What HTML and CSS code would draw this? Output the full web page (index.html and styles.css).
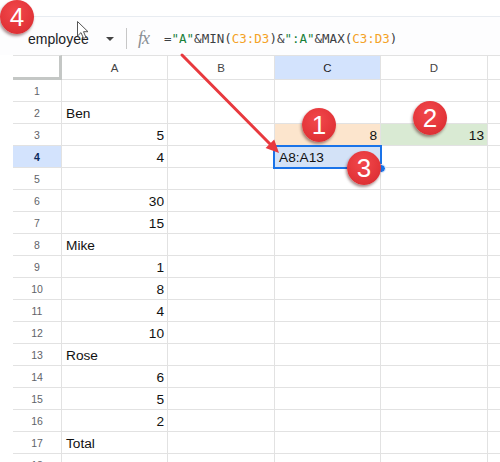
FILE: index.html
```html
<!DOCTYPE html>
<html>
<head>
<meta charset="utf-8">
<link rel="stylesheet" href="styles.css">
</head>
<body>
<div class="top"></div>
<div class="fbar">
  <span class="namebox">employee</span>
  <span class="tri"></span>
  <span class="sep"></span>
  <span class="fx">fx</span>
  <span class="formula"><span class="k">=</span><span class="s">"A"</span><span class="k">&amp;MIN(</span><span class="r">C3:D3</span><span class="k">)&amp;</span><span class="s">":A"</span><span class="k">&amp;MAX(</span><span class="r">C3:D3</span><span class="k">)</span></span>
</div>
<div class="sheet">
  <div class="sp"></div><div class="c corner"></div><div class="c ch">A</div><div class="c ch">B</div><div class="c ch hl">C</div><div class="c ch">D</div><div class="c ch last"></div>

  <div class="sp"></div><div class="c rh">1</div><div class="c"></div><div class="c"></div><div class="c"></div><div class="c"></div><div class="c last"></div>
  <div class="sp"></div><div class="c rh">2</div><div class="c">Ben</div><div class="c"></div><div class="c"></div><div class="c"></div><div class="c last"></div>
  <div class="sp"></div><div class="c rh">3</div><div class="c n">5</div><div class="c"></div><div class="c n peach">8</div><div class="c n green">13</div><div class="c last"></div>
  <div class="sp"></div><div class="c rh rhl">4</div><div class="c n">4</div><div class="c"></div><div class="c selcell">A8:A13</div><div class="c"></div><div class="c last"></div>
  <div class="sp"></div><div class="c rh">5</div><div class="c"></div><div class="c"></div><div class="c"></div><div class="c"></div><div class="c last"></div>
  <div class="sp"></div><div class="c rh">6</div><div class="c n">30</div><div class="c"></div><div class="c"></div><div class="c"></div><div class="c last"></div>
  <div class="sp"></div><div class="c rh">7</div><div class="c n">15</div><div class="c"></div><div class="c"></div><div class="c"></div><div class="c last"></div>
  <div class="sp"></div><div class="c rh">8</div><div class="c">Mike</div><div class="c"></div><div class="c"></div><div class="c"></div><div class="c last"></div>
  <div class="sp"></div><div class="c rh">9</div><div class="c n">1</div><div class="c"></div><div class="c"></div><div class="c"></div><div class="c last"></div>
  <div class="sp"></div><div class="c rh">10</div><div class="c n">8</div><div class="c"></div><div class="c"></div><div class="c"></div><div class="c last"></div>
  <div class="sp"></div><div class="c rh">11</div><div class="c n">4</div><div class="c"></div><div class="c"></div><div class="c"></div><div class="c last"></div>
  <div class="sp"></div><div class="c rh">12</div><div class="c n">10</div><div class="c"></div><div class="c"></div><div class="c"></div><div class="c last"></div>
  <div class="sp"></div><div class="c rh">13</div><div class="c">Rose</div><div class="c"></div><div class="c"></div><div class="c"></div><div class="c last"></div>
  <div class="sp"></div><div class="c rh">14</div><div class="c n">6</div><div class="c"></div><div class="c"></div><div class="c"></div><div class="c last"></div>
  <div class="sp"></div><div class="c rh">15</div><div class="c n">5</div><div class="c"></div><div class="c"></div><div class="c"></div><div class="c last"></div>
  <div class="sp"></div><div class="c rh">16</div><div class="c n">2</div><div class="c"></div><div class="c"></div><div class="c"></div><div class="c last"></div>
  <div class="sp"></div><div class="c rh">17</div><div class="c">Total</div><div class="c"></div><div class="c"></div><div class="c"></div><div class="c last"></div>
  <div class="sp"></div><div class="c rh">18</div><div class="c"></div><div class="c"></div><div class="c"></div><div class="c"></div><div class="c last"></div>
</div>

<div class="selbox"></div>
<div class="handle"></div>

<svg class="arrow" width="500" height="462" viewBox="0 0 500 462">
  <line x1="182" y1="55" x2="271" y2="145" stroke="#e8393e" stroke-width="3" stroke-linecap="round"/>
  <polygon points="279,153 265.6,147.9 274.2,139.5" fill="#e8393e"/>
</svg>

<svg class="cursor" width="13" height="19" viewBox="0 0 13 19">
  <path d="M0.5 0.5 L0.5 15 L4 11.6 L6.6 17.4 L9 16.4 L6.5 10.7 L11 10.7 Z" fill="#fff" stroke="#555" stroke-width="1" stroke-linejoin="round"/>
</svg>

<div class="badge b4">4</div>
<div class="badge b1">1</div>
<div class="badge b2">2</div>
<div class="badge b3">3</div>
</body>
</html>
```

FILE: styles.css
```css
body {
  margin: 0;
  width: 500px;
  height: 462px;
  overflow: hidden;
  background: #fff;
  position: relative;
  font-family: "Liberation Sans", Arial, sans-serif;
}

.top {
  height: 16px;
  border-bottom: 1px solid #e8ecf1;
}

.fbar {
  height: 38px;
  box-sizing: border-box;
  padding-top: 5px;
  display: flex;
  align-items: center;
  background: #fdfdfe;
}

.namebox {
  margin-left: 28px;
  font-size: 14px;
  color: #202124;
  width: 60px;
}

.tri {
  margin-left: 18px;
  width: 0;
  height: 0;
  border-left: 4px solid transparent;
  border-right: 4px solid transparent;
  border-top: 4px solid #444;
}

.sep {
  margin-left: 12px;
  width: 1px;
  height: 21px;
  background: #c7c7c7;
}

.fx {
  margin-left: 11px;
  font-family: "Liberation Serif", serif;
  font-style: italic;
  font-size: 18px;
  color: #8a8f94;
  width: 15px;
  letter-spacing: -1px;
}

.formula {
  margin-left: 11px;
  font-family: "DejaVu Sans Mono", monospace;
  font-size: 12.5px;
  white-space: pre;
}

.k { color: #3c4043; }
.s { color: #188038; }
.r { color: #f4a226; }

.sheet {
  display: grid;
  grid-template-columns: 13px 49px 106px 107px 106px 107px 12px;
  grid-template-rows: 25px;
  grid-auto-rows: 22px;
}

.c {
  box-sizing: border-box;
  border-right: 1px solid #e2e2e2;
  border-bottom: 1px solid #e2e2e2;
  display: flex;
  align-items: flex-end;
  padding: 0 3px 1px 4px;
  font-size: 13.7px;
  line-height: 16px;
  color: #111;
  white-space: nowrap;
  overflow: hidden;
}

.c.last {
  border-right: none;
}

.n {
  justify-content: flex-end;
}

.ch {
  border-top: 1px solid #e2e2e2;
  justify-content: center;
  align-items: center;
  padding: 0;
  font-size: 11.5px;
  color: #444;
}

.corner {
  border-top: 1px solid #e2e2e2;
  border-right: 3px solid #c4c7c5;
  border-bottom: 3px solid #c4c7c5;
}

.hl {
  background: #d3e3fd;
  color: #1f1f1f;
}

.rh {
  justify-content: center;
  align-items: center;
  padding: 0;
  font-size: 10.5px;
  color: #5f6368;
}

.rhl {
  background: #d3e3fd;
  color: #0b2a5c;
  font-weight: bold;
}

.peach {
  background: #fce5cd;
}

.green {
  background: #d9ead3;
}

.selcell {
  background: #d3e2f7;
}

.selbox {
  position: absolute;
  left: 273px;
  top: 145px;
  width: 109px;
  height: 24px;
  box-sizing: border-box;
  border: 2px solid #1a73e8;
}

.handle {
  position: absolute;
  left: 377px;
  top: 164px;
  width: 7px;
  height: 7px;
  border-radius: 50%;
  background: #1a73e8;
  border: 1px solid #fff;
}

.arrow {
  position: absolute;
  left: 0;
  top: 0;
  pointer-events: none;
}

.cursor {
  position: absolute;
  left: 77px;
  top: 21px;
}

.badge {
  position: absolute;
  width: 34px;
  height: 34px;
  border-radius: 50%;
  background: radial-gradient(circle at 45% 35%, #f2484c 0%, #e33539 60%, #d02a2f 100%);
  box-shadow: -1px 2px 3px rgba(60, 0, 0, 0.45);
  color: #fff;
  font-size: 26px;
  display: flex;
  align-items: center;
  justify-content: center;
}

.b4 { left: 0px; top: 0px; }
.b1 { left: 302px; top: 108px; }
.b2 { left: 413px; top: 101px; }
.b3 { left: 347px; top: 151px; }
```
